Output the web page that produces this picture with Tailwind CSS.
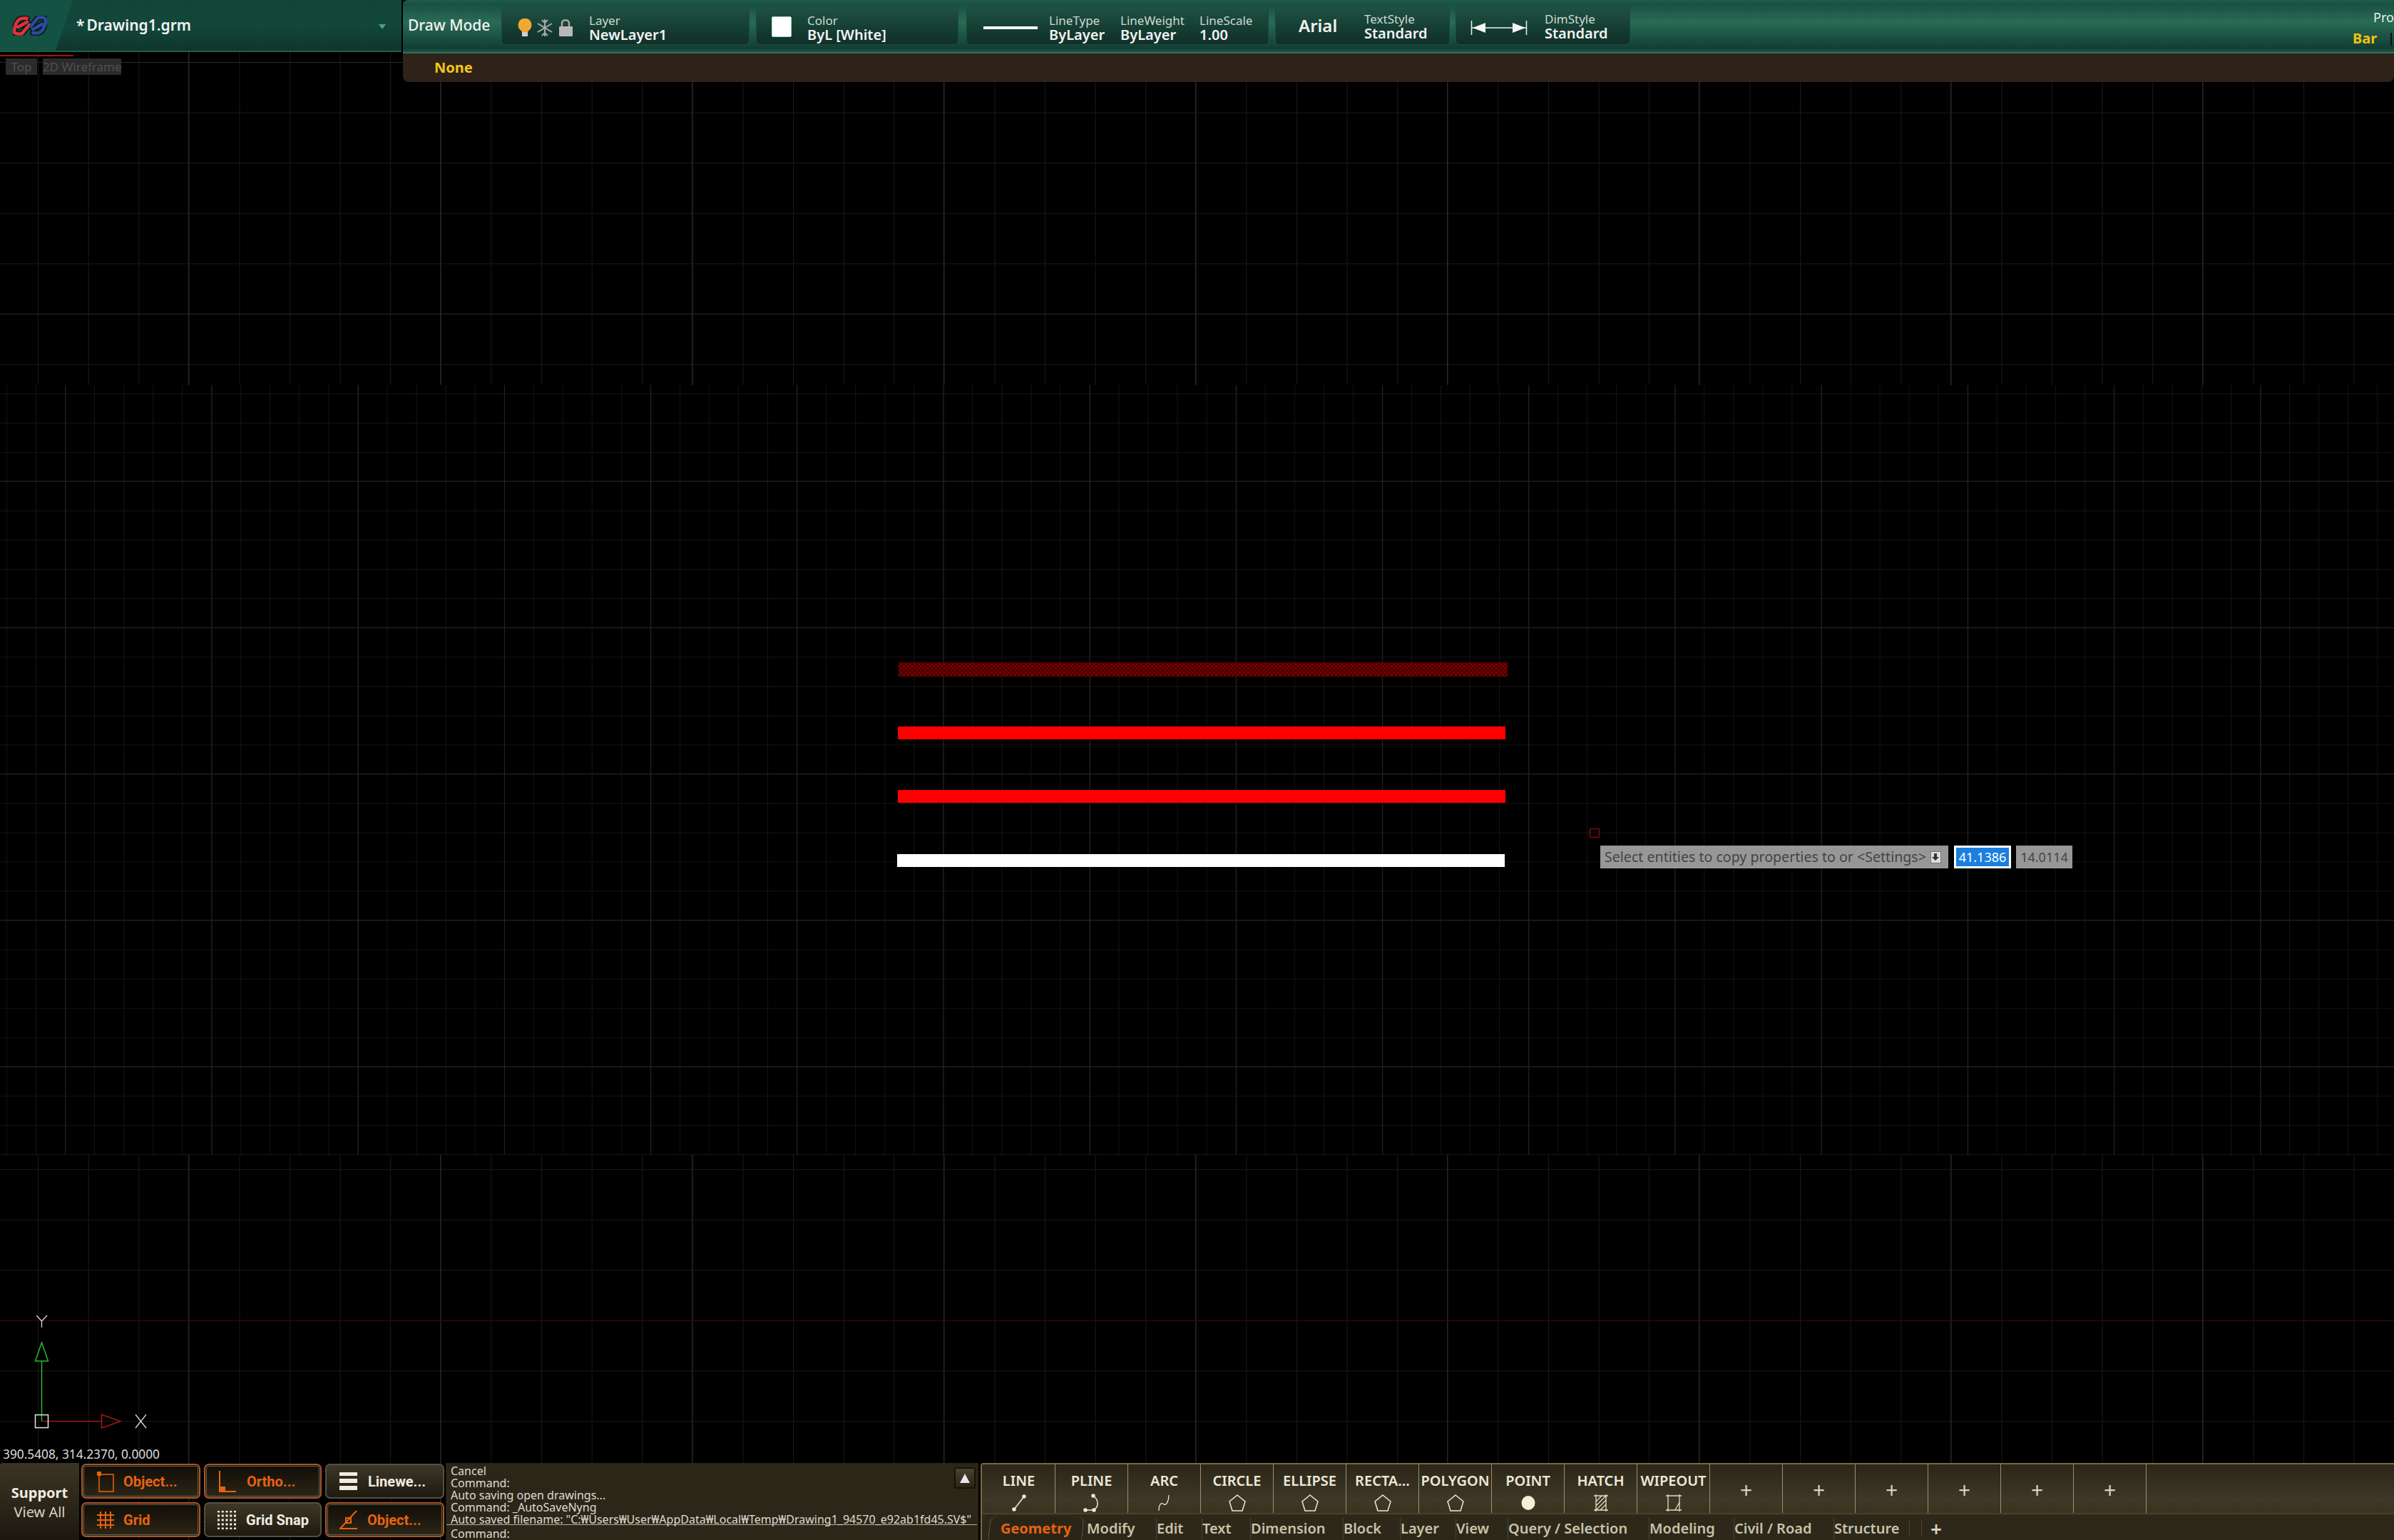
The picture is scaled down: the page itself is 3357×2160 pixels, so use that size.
<!DOCTYPE html>
<html lang="en"><head><meta charset="utf-8"><title>Drawing1.grm</title>
<script src="https://cdn.jsdelivr.net/npm/@tailwindcss/browser@4"></script></head>
<body class="bg-black">
<div class="relative w-[3357px] h-[2160px] overflow-hidden bg-black font-['Noto_Sans','Liberation_Sans',sans-serif] flex flex-col justify-between">

<!-- drawing canvas -->
<svg class="absolute inset-0" width="3357" height="2160" viewBox="0 0 3357 2160">
  <defs>
    <pattern id="g70" patternUnits="userSpaceOnUse" x="53" y="87" width="70.6" height="70.6"><path d="M.5 0V70.6M0 .5H70.6" stroke="#191919" fill="none"/></pattern>
    <pattern id="g353" patternUnits="userSpaceOnUse" x="264" y="87" width="353" height="353"><path d="M.5 0V353M0 .5H353" stroke="#2a2a2a" fill="none"/></pattern>
    <pattern id="g41" patternUnits="userSpaceOnUse" x="50" y="593" width="41.04" height="41.04"><path d="M.5 0V41.04M0 .5H41.04" stroke="#141414" fill="none"/></pattern>
    <pattern id="g205" patternUnits="userSpaceOnUse" x="91.4" y="1085" width="205.2" height="205.2"><path d="M.5 0V205.2M0 .5H205.2" stroke="#242424" fill="none"/></pattern>
    <pattern id="g70b" patternUnits="userSpaceOnUse" x="53" y="1640" width="70.6" height="70.6"><path d="M.5 0V70.6M0 .5H70.6" stroke="#191919" fill="none"/></pattern>
    <pattern id="g353b" patternUnits="userSpaceOnUse" x="264" y="1640" width="353" height="353"><path d="M.5 0V353" stroke="#262626" fill="none"/></pattern>
    <pattern id="hatch" patternUnits="userSpaceOnUse" width="6" height="6"><rect width="6" height="6" fill="#780000"/><path d="M0 0h3v3H0zM3 3h3v3H3z" fill="#420000"/></pattern>
  </defs>
  <rect y="0" width="3357" height="540" fill="url(#g70)"/>
  <rect y="0" width="3357" height="540" fill="url(#g353)"/>
  <rect y="540" width="3357" height="1080" fill="url(#g41)"/>
  <rect y="540" width="3357" height="1080" fill="url(#g205)"/>
  <rect y="1620" width="3357" height="540" fill="url(#g70b)"/>
  <rect y="1620" width="3357" height="540" fill="url(#g353b)"/>
  <path d="M0 1852.5H3357" stroke="#3a0808"/>
  <rect x="1260" y="929" width="854" height="20" fill="url(#hatch)"/>
  <rect x="1259" y="1019" width="852" height="18" fill="#ff0000"/>
  <rect x="1259" y="1108" width="852" height="18" fill="#ff0000"/>
  <rect x="1258" y="1198" width="852" height="18" fill="#ffffff"/>
  <rect x="2229.500" y="1162.500" width="13" height="12" rx="1" fill="none" stroke="#7a0a14" stroke-width="1.500"/>
  <!-- UCS icon -->
  <path d="M58.500 1993V1909M49.500 1909H67.500L58.500 1883Z" fill="none" stroke="#2fb52f" stroke-width="1.500"/>
  <path d="M58.500 1993.500H142.500M142.500 1984V2003L169 1993.500Z" fill="none" stroke="#a81818" stroke-width="1.500"/>
  <rect x="49.500" y="1984.500" width="18" height="18" fill="none" stroke="#e6e6e6" stroke-width="1.500"/>
  <path d="M190 1984L205 2003M205 1984L190 2003M51 1845L58.500 1853L66 1845M58.500 1853V1862" fill="none" stroke="#d8d8d8" stroke-width="1.300"/>
</svg>

<!-- tooltip over the canvas -->
<div class="absolute left-[2244px] top-[1186px] flex gap-[8px] h-[32px] text-[19.600px] leading-[32px]">
  <div class="w-[488px] bg-[#979797] text-[#444] pl-[6px] flex items-center justify-between pr-[10px]"><span class="whitespace-nowrap">Select entities to copy properties to or &lt;Settings&gt;</span>
    <svg width="15" height="17" viewBox="0 0 15 17"><rect x=".5" y=".5" width="14" height="16" fill="#ddd" stroke="#777"/><path d="M5 3h4v5h3l-5 5-5-5h3z" fill="#333"/></svg></div>
  <div class="w-[80px] bg-[#1a7fe0] border-[3px] border-white text-white leading-[26px] text-center text-[18px]">41.1386</div>
  <div class="w-[79px] bg-[#979797] text-[#444] text-center ml-[-1px] text-[18px]">14.0114</div>
</div>

<!-- top bars -->
<header class="relative flex items-start gap-[2px]">
  <div class="w-[563px] shrink-0">
    <div class="relative h-[73px] flex items-center bg-gradient-to-b from-[#134438] via-[#12473a] to-[#0f352c] border-b-2 border-[#1f5f4c]">
      <div class="absolute left-0 top-0 w-[103px] h-[72px] bg-[#145244] [clip-path:polygon(0_0,100%_0,75%_100%,0_100%)]"></div>
      <svg class="relative ml-[18px]" width="48" height="28" viewBox="0 0 46 26" fill="none" stroke-linecap="round" stroke-linejoin="round">
        <g stroke="#0b1512" stroke-width="7.500">
          <path d="M19 3H14C9 3 6 6 4 11L2 18C1 22 3 24 7 24H12L22 12M7 15L19 8"/>
          <path d="M27 23H32C37 23 40 20 42 15L44 8C45 4 43 2 39 2H34L24 14M39 11L27 18"/>
        </g>
        <g stroke-width="4.500">
          <path d="M19 3H14C9 3 6 6 4 11L2 18C1 22 3 24 7 24H12L22 12M7 15L19 8" stroke="#d8353b"/>
          <path d="M27 23H32C37 23 40 20 42 15L44 8C45 4 43 2 39 2H34L24 14M39 11L27 18" stroke="#2b4aa0"/>
        </g>
      </svg>
      <span class="relative ml-[41px] text-[21px] font-semibold text-[#f2f2f2] leading-none whitespace-nowrap">*<span class="ml-[3px]">Drawing1.grm</span></span>
      <svg class="absolute left-[531px] top-[34px]" width="10" height="7" viewBox="0 0 10 7"><path d="M0 0H10L5 7Z" fill="#4f9d88"/></svg>
    </div>
    <div class="relative">
      <div class="h-[2px] w-[103px] mt-[4px] bg-[#a01515]"></div>
      <div class="flex gap-[8px] mt-[3px] pl-[8px] text-[17px] leading-[23px] text-[#505050]">
        <span class="w-[44px] text-center bg-[#2b2b2b]">Top</span>
        <span class="w-[110px] text-center bg-[#2b2b2b] whitespace-nowrap">2D Wireframe</span>
      </div>
    </div>
  </div>

  <div class="flex-1 min-w-0">
    <div class="relative h-[75px] flex items-start pt-[9px] rounded-tl-[6px] border-b-2 border-[#2f7059] bg-[linear-gradient(180deg,#1f5c4b_0%,#1a4f41_8%,#2a6b55_42%,#1c5244_70%,#133f34_92%,#1d5444_100%)] text-[#f2f2f2]">
      <div class="w-[138px] shrink-0 pl-[7px] h-[54px] flex items-center text-[21px] font-medium">Draw Mode</div>

      <div class="w-[348px] shrink-0 h-[54px] rounded-[6px] border border-[#1a4b3e] bg-gradient-to-b from-[#1e5242] to-[#0f2f28] flex items-start pl-[21px] mr-[9px]">
        <svg class="mt-[16px]" width="84" height="26" viewBox="0 0 84 26">
          <ellipse cx="11" cy="9" rx="9.500" ry="9.500" fill="#f2a735"/><path d="M4 14H18L15 19H7Z" fill="#f2a735"/><rect x="7" y="19" width="8" height="6" fill="#cfcfcf"/>
          <g stroke="#a8a8a8" stroke-width="2" fill="none"><path d="M39 1V25M29 7L49 19M49 7L29 19M35 2L39 6L43 2M35 24L39 20L43 24"/></g>
          <path d="M63 11V6C63 1 73 1 73 6V11" fill="none" stroke="#a8a8a8" stroke-width="2.500"/><rect x="59" y="11" width="19" height="14" rx="1" fill="#b8b8b8"/>
        </svg>
        <div class="ml-[17px] pt-[9px] flex flex-col"><span class="text-[17px] leading-[20px] text-[#cfd8d4]">Layer</span><span class="text-[20px] leading-[20px] font-semibold">NewLayer1</span></div>
      </div>

      <div class="w-[284px] shrink-0 h-[54px] rounded-[6px] border border-[#1a4b3e] bg-gradient-to-b from-[#1e5242] to-[#0f2f28] flex items-start pl-[21px] mr-[11px]">
        <div class="w-[28px] h-[29px] mt-[13px] bg-white rounded-[2px] border border-[#9db]"></div>
        <div class="ml-[22px] pt-[9px] flex flex-col"><span class="text-[17px] leading-[20px] text-[#cfd8d4]">Color</span><span class="text-[20px] leading-[20px] font-semibold whitespace-nowrap">ByL [White]</span></div>
      </div>

      <div class="w-[424px] shrink-0 h-[54px] rounded-[6px] border border-[#1a4b3e] bg-gradient-to-b from-[#1e5242] to-[#0f2f28] flex items-start pl-[23px] mr-[9px]">
        <div class="w-[76px] h-[4px] mt-[27px] bg-white"></div>
        <div class="w-[100px] ml-[16px] pt-[9px] flex flex-col"><span class="text-[17px] leading-[20px] text-[#cfd8d4]">LineType</span><span class="text-[20px] leading-[20px] font-semibold">ByLayer</span></div>
        <div class="w-[111px] pt-[9px] flex flex-col"><span class="text-[17px] leading-[20px] text-[#cfd8d4]">LineWeight</span><span class="text-[20px] leading-[20px] font-semibold">ByLayer</span></div>
        <div class="pt-[9px] flex flex-col"><span class="text-[17px] leading-[20px] text-[#cfd8d4]">LineScale</span><span class="text-[20px] leading-[20px] font-semibold">1.00</span></div>
      </div>

      <div class="w-[245px] shrink-0 h-[54px] rounded-[6px] border border-[#1a4b3e] bg-gradient-to-b from-[#1e5242] to-[#0f2f28] flex items-start pl-[32px] mr-[8px]">
        <span class="w-[92px] mt-[10px] text-[24px] leading-[32px] font-semibold">Arial</span>
        <div class="pt-[7px] flex flex-col"><span class="text-[17px] leading-[20px] text-[#cfd8d4]">TextStyle</span><span class="text-[20px] leading-[20px] font-semibold">Standard</span></div>
      </div>

      <div class="w-[245px] shrink-0 h-[54px] rounded-[6px] border border-[#1a4b3e] bg-gradient-to-b from-[#1e5242] to-[#0f2f28] flex items-start pl-[20px]">
        <svg class="mt-[18px]" width="80" height="22" viewBox="0 0 80 22"><path d="M1.500 1V21M78.500 1V21M2 11H78" stroke="#f0f0f0" stroke-width="1.500"/><path d="M3 11L21 4V18ZM77 11L59 4V18Z" fill="#f5f5f5"/></svg>
        <div class="ml-[24px] pt-[7px] flex flex-col"><span class="text-[17px] leading-[20px] text-[#cfd8d4]">DimStyle</span><span class="text-[20px] leading-[20px] font-semibold">Standard</span></div>
      </div>

      <div class="absolute left-[2763px] top-[12px] text-[18px] leading-[24px] text-[#e6eee9] whitespace-nowrap">Prop</div>
      <div class="absolute left-[2734px] top-[41px] text-[20px] leading-[26px] font-bold text-[#f2c30f]">Bar</div>
      <div class="absolute left-[2787px] top-[46px] w-[2px] h-[18px] bg-[#06140f]"></div>
    </div>
    <div class="h-[40px] bg-[#2e2219] rounded-b-[8px] pl-[44px] flex items-center text-[20px] font-bold text-[#f5c518]">None</div>
  </div>
</header>

<!-- coordinates + bottom bars -->
<div class="relative">
  <div class="pl-[4px] h-[24px] text-[17.300px] leading-[24px] text-[#dcdcdc]">390.5408, 314.2370, 0.0000</div>
  <footer class="h-[108px] flex">
    <div class="w-[111px] shrink-0 rounded-tl-[3px] bg-gradient-to-b from-[#3b3424] via-[#2c2719] to-[#1c1810] flex flex-col items-center justify-center pt-[2px] text-[#f0ece0]">
      <span class="text-[20px] leading-[27px] font-bold">Support</span>
      <span class="text-[20px] leading-[27px] font-normal text-[#d6d2c6]">View All</span>
    </div>

    <div class="w-[514px] shrink-0 pl-[3px] pt-[1px] grid grid-cols-[167px_165px_167px] grid-rows-[49px_49px] gap-x-[5px] gap-y-[5px] font-['Roboto','Noto_Sans',sans-serif]">
      <div class="rounded-[7px] border-2 border-[#a9582a] outline outline-1 -outline-offset-4 outline-[#6d5f45] bg-gradient-to-b from-[#100d07] to-[#2d2718] flex items-center pl-[20px] text-[20px] font-bold text-[#e8620f]">
        <svg width="24" height="30" viewBox="0 0 24 30" class="shrink-0"><rect x="3" y="5" width="20" height="24" fill="none" stroke="#e8620f" stroke-width="1.500"/><rect x="0" y="1" width="6" height="6" fill="#e8620f"/></svg><span class="ml-[13px]">Object...</span></div>
      <div class="rounded-[7px] border-2 border-[#a9582a] outline outline-1 -outline-offset-4 outline-[#6d5f45] bg-gradient-to-b from-[#100d07] to-[#2d2718] flex items-center pl-[18px] text-[20px] font-bold text-[#e8620f]">
        <svg width="26" height="30" viewBox="0 0 26 30" class="shrink-0"><path d="M2 0V29H25" fill="none" stroke="#e8620f" stroke-width="2"/><rect x="2" y="22" width="8" height="7" fill="#e8620f"/></svg><span class="ml-[14px]">Ortho...</span></div>
      <div class="rounded-[7px] border-2 border-[#57503e] bg-gradient-to-b from-[#3e3727] to-[#1e1a11] flex items-center pl-[18px] text-[20px] font-bold text-[#f0ece0]">
        <svg width="25" height="25" viewBox="0 0 25 25" class="shrink-0"><path d="M0 0H25V5H0ZM0 9H25V15H0ZM0 19H25V25H0Z" fill="#f0ece0"/></svg><span class="ml-[15px]">Linewe...</span></div>
      <div class="rounded-[7px] border-2 border-[#a9582a] outline outline-1 -outline-offset-4 outline-[#6d5f45] bg-gradient-to-b from-[#100d07] to-[#2d2718] flex items-center pl-[20px] text-[20px] font-bold text-[#e8620f]">
        <svg width="24" height="24" viewBox="0 0 24 24" class="shrink-0" stroke="#e8620f" stroke-width="2"><path d="M5 0V24M12 0V24M19 0V24M0 5H24M0 12H24M0 19H24"/></svg><span class="ml-[13px]">Grid</span></div>
      <div class="rounded-[7px] border-2 border-[#57503e] bg-gradient-to-b from-[#3e3727] to-[#1e1a11] flex items-center pl-[17px] text-[20px] font-bold text-[#f0ece0]">
        <svg width="26" height="26" viewBox="0 0 26 26" class="shrink-0"><path d="M0 1H26M0 7H26M0 13H26M0 19H26M0 25H26" stroke="#f0ece0" stroke-width="3" stroke-dasharray="3 2.750"/></svg><span class="ml-[14px]">Grid Snap</span></div>
      <div class="rounded-[7px] border-2 border-[#a9582a] outline outline-1 -outline-offset-4 outline-[#6d5f45] bg-gradient-to-b from-[#100d07] to-[#2d2718] flex items-center pl-[18px] text-[20px] font-bold text-[#e8620f]">
        <svg width="26" height="28" viewBox="0 0 26 28" class="shrink-0" fill="none" stroke="#e8620f" stroke-width="2"><path d="M24 1L1 26H25"/><rect x="9" y="11" width="7" height="7"/></svg><span class="ml-[13px]">Object...</span></div>
    </div>

    <div class="w-[747px] shrink-0 relative bg-[#2c2619] text-[16px] text-[#dedbd2] leading-[17px] pl-[6px] pt-[3px] border-l border-[#201b11]">
      <div class="h-[83px] whitespace-nowrap">
        <div>Cancel</div><div>Command:</div><div>Auto saving open drawings...</div><div>Command: _AutoSaveNyng</div><div>Auto saved filename: "C:₩Users₩User₩AppData₩Local₩Temp₩Drawing1_94570_e92ab1fd45.SV$"</div>
      </div>
      <div class="h-px bg-[#b5b0a0] mr-[2px] -ml-[6px]"></div>
      <div class="pt-[4px]">Command:</div>
      <div class="absolute left-[712px] top-[6px] w-[30px] h-[30px] rounded-[3px] border-2 border-[#171309] bg-gradient-to-b from-[#4a4232] to-[#2b2517] flex items-center justify-center">
        <svg width="14" height="13" viewBox="0 0 14 13"><path d="M7 0L14 13H0Z" fill="#e8e6ea"/></svg></div>
    </div>

    <div class="flex-1 min-w-0 ml-[3px] border-l-2 border-t-2 border-[#7a6a40] rounded-tl-[4px] bg-[#2d2819] flex flex-col">
      <div class="h-[71px] flex items-stretch pl-[1px] bg-[linear-gradient(180deg,#2b2618_0%,#3f3828_75%,#39321f_100%)] border-b-2 border-[#4a422e] text-[#eee8d8]">
        <div class="w-[102px] flex flex-col items-center pt-[7px] border-r border-[#9b906d]"><span class="text-[20px] leading-[32px] font-semibold">LINE</span><svg class="mt-[2px]" width="24" height="26" viewBox="0 0 24 26" fill="none" stroke="#f0e9d5" stroke-width="1.500"><path d="M19 4L5 22"/><circle cx="19" cy="4" r="2" fill="#f0e9d5"/><circle cx="5" cy="22" r="2" fill="#f0e9d5"/></svg></div>
        <div class="w-[102px] flex flex-col items-center pt-[7px] border-r border-[#9b906d]"><span class="text-[20px] leading-[32px] font-semibold">PLINE</span><svg class="mt-[2px]" width="24" height="26" viewBox="0 0 24 26" fill="none" stroke="#f0e9d5" stroke-width="1.500"><path d="M14 3C22 9 22 18 15 23H3"/><circle cx="14" cy="3" r="2" fill="#f0e9d5"/><circle cx="15" cy="23" r="2" fill="#f0e9d5"/><circle cx="3" cy="23" r="2" fill="#f0e9d5"/></svg></div>
        <div class="w-[102px] flex flex-col items-center pt-[7px] border-r border-[#9b906d]"><span class="text-[20px] leading-[32px] font-semibold">ARC</span><svg class="mt-[2px]" width="24" height="26" viewBox="0 0 24 26" fill="none" stroke="#f0e9d5" stroke-width="1.300"><path d="M4 24C4 14 8 12 11 15C14 17 18 11 18 2"/></svg></div>
        <div class="w-[102px] flex flex-col items-center pt-[7px] border-r border-[#9b906d]"><span class="text-[20px] leading-[32px] font-semibold">CIRCLE</span><svg class="mt-[2px]" width="24" height="26" viewBox="0 0 24 26" fill="none" stroke="#f0e9d5" stroke-width="1.500"><path d="M12 2L23 11L19 24H5L1 11Z"/></svg></div>
        <div class="w-[102px] flex flex-col items-center pt-[7px] border-r border-[#9b906d]"><span class="text-[20px] leading-[32px] font-semibold">ELLIPSE</span><svg class="mt-[2px]" width="24" height="26" viewBox="0 0 24 26" fill="none" stroke="#f0e9d5" stroke-width="1.500"><path d="M12 2L23 11L19 24H5L1 11Z"/></svg></div>
        <div class="w-[102px] flex flex-col items-center pt-[7px] border-r border-[#9b906d]"><span class="text-[20px] leading-[32px] font-semibold">RECTA...</span><svg class="mt-[2px]" width="24" height="26" viewBox="0 0 24 26" fill="none" stroke="#f0e9d5" stroke-width="1.500"><path d="M12 2L23 11L19 24H5L1 11Z"/></svg></div>
        <div class="w-[102px] flex flex-col items-center pt-[7px] border-r border-[#9b906d]"><span class="text-[20px] leading-[32px] font-semibold">POLYGON</span><svg class="mt-[2px]" width="24" height="26" viewBox="0 0 24 26" fill="none" stroke="#f0e9d5" stroke-width="1.500"><path d="M12 2L23 11L19 24H5L1 11Z"/></svg></div>
        <div class="w-[102px] flex flex-col items-center pt-[7px] border-r border-[#9b906d]"><span class="text-[20px] leading-[32px] font-semibold">POINT</span><svg class="mt-[2px]" width="24" height="26" viewBox="0 0 24 26"><ellipse cx="12" cy="13" rx="9.500" ry="10" fill="#f5efd8"/></svg></div>
        <div class="w-[102px] flex flex-col items-center pt-[7px] border-r border-[#9b906d]"><span class="text-[20px] leading-[32px] font-semibold">HATCH</span><svg class="mt-[2px]" width="24" height="26" viewBox="0 0 24 26" fill="none" stroke="#e5ddc4" stroke-width="1.300"><path d="M2 3H22M2 23H22M5 1V25M19 1V25M5 11L13 3M5 17L19 3M5 23L19 9M11 23L19 15"/></svg></div>
        <div class="w-[102px] flex flex-col items-center pt-[7px] border-r border-[#9b906d]"><span class="text-[20px] leading-[32px] font-semibold">WIPEOUT</span><svg class="mt-[2px]" width="24" height="26" viewBox="0 0 24 26" fill="none" stroke="#e5ddc4" stroke-width="1.300"><path d="M1 3H23M1 23H23M4 1V25M20 1V25M14 23L20 12"/></svg></div>
        <div class="w-[102px] flex items-center justify-center pt-[3px] border-r border-[#9b906d] text-[30px] leading-none text-[#d8d2bd]">+</div>
        <div class="w-[102px] flex items-center justify-center pt-[3px] border-r border-[#9b906d] text-[30px] leading-none text-[#d8d2bd]">+</div>
        <div class="w-[102px] flex items-center justify-center pt-[3px] border-r border-[#9b906d] text-[30px] leading-none text-[#d8d2bd]">+</div>
        <div class="w-[102px] flex items-center justify-center pt-[3px] border-r border-[#9b906d] text-[30px] leading-none text-[#d8d2bd]">+</div>
        <div class="w-[102px] flex items-center justify-center pt-[3px] border-r border-[#9b906d] text-[30px] leading-none text-[#d8d2bd]">+</div>
        <div class="w-[102px] flex items-center justify-center pt-[3px] border-r border-[#9b906d] text-[30px] leading-none text-[#d8d2bd]">+</div>
      </div>
      <div class="flex-1 flex items-center text-[20px] font-semibold text-[#c9c2aa] whitespace-nowrap pl-[10px] pt-[3px]">
        <div class="relative w-[132px] h-[33px] flex items-center justify-center text-[#e8620f] font-bold rounded-t-[10px] border-x border-[#6d6346] bg-[#2a2517] -skew-x-6"><span class="skew-x-6">Geometry</span></div>
        <span class="ml-[5px] w-[98px] border-r border-[#4b4431]">Modify</span>
        <span class="w-[64px] border-r border-[#4b4431]">Edit</span>
        <span class="w-[68px] border-r border-[#4b4431]">Text</span>
        <span class="w-[130px] border-r border-[#4b4431]">Dimension</span>
        <span class="w-[80px] border-r border-[#4b4431]">Block</span>
        <span class="w-[78px] border-r border-[#4b4431]">Layer</span>
        <span class="w-[73px] border-r border-[#4b4431]">View</span>
        <span class="w-[198px] border-r border-[#4b4431]">Query / Selection</span>
        <span class="w-[119px] border-r border-[#4b4431]">Modeling</span>
        <span class="w-[140px] border-r border-[#4b4431]">Civil / Road</span>
        <span class="w-[105px]">Structure</span>
        <span class="h-[24px] w-[18px] border-x border-[#4b4431]"></span>
        <span class="ml-[12px] text-[28px] leading-none text-[#d8d2bd]">+</span>
      </div>
    </div>
  </footer>
</div>
</div>
</body></html>
